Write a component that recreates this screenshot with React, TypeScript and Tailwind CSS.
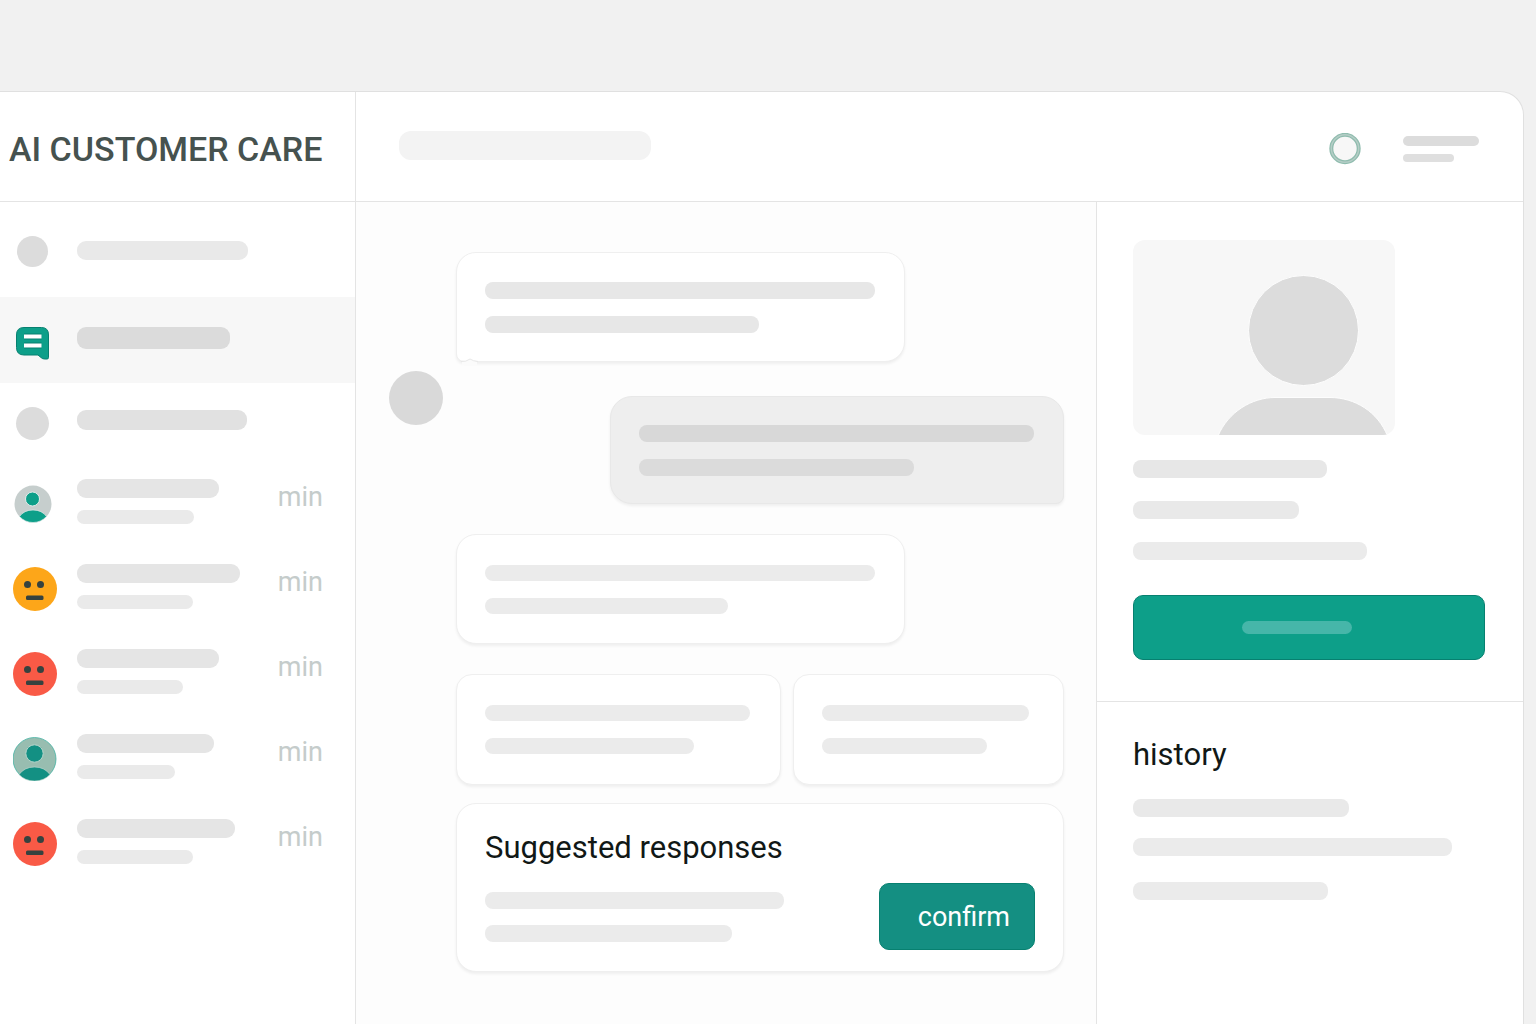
import React, { useState } from "react";
import clsx from "clsx";

const Bar = ({ className }: { className: string }) => (
  <span className={clsx("block max-w-full", className)} />
);

const ChatIcon = () => (
  <svg width="34" height="34" viewBox="0 0 34 34" aria-hidden="true">
    <path
      d="M8 .5H25.500Q32.500 .5 32.500 8V30.500Q32.500 32 31 32H28.500Q26.500 32 25 30.500L22 28H8Q.5 28 .5 20.500V8Q.5 .5 8 .5Z"
      fill="#0d9f89"
      stroke="#078070"
    />
    <path d="M8 9.500H25.500M8 18.500H25.500" stroke="#078070" strokeWidth="6" />
    <path d="M8 9.500H25.500M8 18.500H25.500" stroke="#ffffff" strokeWidth="4" />
  </svg>
);

const Face = ({ fill }: { fill: string }) => (
  <svg width="44" height="44" viewBox="0 0 44 44" aria-hidden="true">
    <circle cx="22" cy="22" r="22" fill={fill} />
    <circle cx="14.500" cy="17.500" r="3.500" fill="#35423f" />
    <circle cx="27.500" cy="17.500" r="3.500" fill="#35423f" />
    <rect x="13" y="28.500" width="17.500" height="4.500" rx="1.500" fill="#35423f" />
  </svg>
);

const PersonGray = () => (
  <svg width="42" height="38" viewBox="0 0 42 38" aria-hidden="true">
    <circle cx="19" cy="19" r="18.500" fill="#c6cecd" />
    <circle cx="18.500" cy="14" r="7" fill="#0d9f89" stroke="#e3eceb" />
    <path
      d="M5.500 31.500Q10 25 19 25T32.500 31.500Q27 37.500 19 37.500T5.500 31.500Z"
      fill="#0d9f89"
      stroke="#e3eceb"
      strokeWidth=".7"
    />
  </svg>
);

const PersonGreen = () => (
  <svg width="44" height="44" viewBox="0 0 44 44" aria-hidden="true">
    <circle cx="21.500" cy="22" r="21.500" fill="#98bdb0" stroke="#45b3a3" strokeWidth=".8" />
    <circle cx="21.500" cy="16.500" r="8.700" fill="#139083" stroke="#b9d6cd" />
    <path
      d="M6 37.500Q11.500 30 21.500 30T37 37.500Q31 44 21.500 44T6 37.500Z"
      fill="#139083"
      stroke="#b9d6cd"
      strokeWidth=".7"
    />
  </svg>
);

const conversations = [
  { avatar: <PersonGray />, first: "w-[142px]", second: "w-[117px]" },
  { avatar: <Face fill="#fda619" />, first: "w-[163px]", second: "w-[116px]" },
  { avatar: <Face fill="#f95a46" />, first: "w-[142px]", second: "w-[106px]" },
  { avatar: <PersonGreen />, first: "w-[137px]", second: "w-[98px]" },
  { avatar: <Face fill="#f95a46" />, first: "w-[158px]", second: "w-[116px]" },
];

const Sidebar = () => {
  const [selected, setSelected] = useState(-1);

  return (
    <aside className="w-[356px] shrink-0 border-r border-[#e4e4e4] bg-white">
      <nav aria-label="Main">
        <a href="#home" aria-label="Home" className="flex h-[95px] gap-[12px] pt-[34px]">
          <span className="flex w-[65px] justify-center">
            <span className="size-[31px] rounded-full bg-[#dcdcdc]" />
          </span>
          <Bar className="mt-[5px] h-[19px] w-[171px] rounded-[9px] bg-[#e9e9e9]" />
        </a>
        <a
          href="#chats"
          aria-label="Chats"
          aria-current="page"
          className="flex h-[86px] gap-[12px] bg-[#f7f7f7] pt-[30px]"
        >
          <span className="flex w-[65px] justify-center">
            <ChatIcon />
          </span>
          <Bar className="h-[22px] w-[153px] rounded-[9px] bg-[#dbdbdb]" />
        </a>
        <a href="#contacts" aria-label="Contacts" className="flex h-[80px] gap-[12px] pt-[24px]">
          <span className="flex w-[65px] justify-center">
            <span className="size-[33px] rounded-full bg-[#dcdcdc]" />
          </span>
          <Bar className="mt-[3px] h-[20px] w-[170px] rounded-[9px] bg-[#e1e1e1]" />
        </a>
      </nav>

      <ul>
        {conversations.map((item, index) => (
          <li key={index}>
            <button
              type="button"
              aria-pressed={selected === index}
              onClick={() => setSelected(index)}
              className="flex h-[85px] w-full items-start pr-8 text-left"
            >
              <span className="flex h-[82px] w-[70px] items-center justify-center">
                {item.avatar}
              </span>
              <span className="flex flex-1 flex-col gap-3 pt-4 pl-[7px]">
                <Bar className={clsx("h-[19px] rounded-[9px] bg-[#e5e5e5]", item.first)} />
                <Bar className={clsx("h-[14px] rounded-[7px] bg-[#eaeaea]", item.second)} />
              </span>
              <span className="pt-4 text-[27px] leading-9 text-[#c5cccb]">min</span>
            </button>
          </li>
        ))}
      </ul>
    </aside>
  );
};

const card = "border border-[#efefef] bg-white px-7 shadow-[0_2px_3px_rgba(0,0,0,0.06)]";

const Chat = () => (
  <main className="flex min-w-0 flex-1 gap-[13px] bg-[#fdfdfd] pr-8 pl-[33px]">
    <div className="pt-[169px]">
      <div className="size-[54px] rounded-full bg-[#d9d9d9]" />
    </div>

    <div className="flex min-w-0 flex-1 flex-col pt-[50px] pb-[51px]">
      <div
        className={clsx(
          card,
          "relative flex h-[110px] w-[449px] max-w-full flex-col justify-center gap-[17px] rounded-[20px] rounded-bl-[8px]",
        )}
      >
        <Bar className="h-[17px] w-[390px] rounded-[8px] bg-[#e7e7e7]" />
        <Bar className="h-[17px] w-[274px] rounded-[8px] bg-[#e7e7e7]" />
        {/* notch of the bubble tail */}
        <svg
          className="absolute -bottom-1 -left-px"
          width="24"
          height="8"
          viewBox="0 0 24 8"
          aria-hidden="true"
        >
          <path d="M6 5Q10 4 14 2Q17 4 21 5V8H6Z" fill="#fbfbfb" />
          <path d="M5 4.500Q10 5 14 2Q17 4 22 4.500" fill="none" stroke="#e8e8e8" />
        </svg>
      </div>

      <div className="mt-[34px] flex h-[108px] w-[454px] max-w-full flex-col justify-center gap-[17px] self-end rounded-[22px] rounded-br-[8px] border border-[#e8e8e8] bg-[#eeeeee] px-7 shadow-[0_2px_3px_rgba(0,0,0,0.06)]">
        <Bar className="h-[17px] w-[395px] rounded-[8px] bg-[#d8d8d8]" />
        <Bar className="h-[17px] w-[275px] rounded-[8px] bg-[#dbdbdb]" />
      </div>

      <div
        className={clsx(
          card,
          "mt-[30px] flex h-[110px] w-[449px] max-w-full flex-col justify-center gap-[17px] rounded-[20px]",
        )}
      >
        <Bar className="h-[16px] w-[390px] rounded-[8px] bg-[#ebebeb]" />
        <Bar className="h-[16px] w-[243px] rounded-[8px] bg-[#ebebeb]" />
      </div>

      <div className="mt-[30px] flex gap-3">
        <div
          className={clsx(
            card,
            "flex h-[111px] w-[325px] min-w-0 flex-col justify-center gap-[17px] rounded-[16px]",
          )}
        >
          <Bar className="h-[16px] w-[265px] rounded-[8px] bg-[#ebebeb]" />
          <Bar className="h-[16px] w-[209px] rounded-[8px] bg-[#ebebeb]" />
        </div>
        <div
          className={clsx(
            card,
            "flex h-[111px] min-w-0 flex-1 flex-col justify-center gap-[17px] rounded-[16px]",
          )}
        >
          <Bar className="h-[16px] w-[207px] rounded-[8px] bg-[#ebebeb]" />
          <Bar className="h-[16px] w-[165px] rounded-[8px] bg-[#ebebeb]" />
        </div>
      </div>

      <section
        aria-labelledby="suggested"
        className={clsx(card, "mt-[18px] flex flex-col rounded-[20px] pt-6 pb-[21px]")}
      >
        <h2 id="suggested" className="text-[31px] leading-10 text-[#111816]">
          Suggested responses
        </h2>
        <div className="mt-[15px] flex items-center justify-between">
          <div className="flex flex-col gap-4">
            <Bar className="h-[17px] w-[299px] rounded-[8px] bg-[#ebebeb]" />
            <Bar className="h-[17px] w-[247px] rounded-[8px] bg-[#ebebeb]" />
          </div>
          <button
            type="button"
            className="flex h-[67px] w-[156px] items-center justify-end rounded-[10px] border border-[#078070] bg-[#148f82] pt-[2px] pr-6 text-[27px] text-white"
          >
            confirm
          </button>
        </div>
      </section>
    </div>
  </main>
);

const Details = () => (
  <aside className="w-[427px] shrink-0 border-l border-[#e4e4e4] bg-white">
    <section
      aria-label="Customer"
      className="border-b border-[#e4e4e4] pt-[38px] pr-[38px] pb-[41px] pl-9"
    >
      <div className="w-[262px] overflow-hidden rounded-[12px] bg-[#f7f7f7]">
        <svg className="block" width="262" height="195" viewBox="0 0 262 195" aria-hidden="true">
          <circle cx="170.500" cy="90.500" r="55" fill="#dcdcdc" stroke="#fdfdfd" />
          <path
            d="M85 196C95 172 119 157.500 142 157.500H197C222 157.500 245 172 254.500 196Z"
            fill="#dcdcdc"
            stroke="#fdfdfd"
          />
        </svg>
      </div>
      <div className="mt-[25px] flex flex-col gap-[23px]">
        <Bar className="h-[18px] w-[194px] rounded-[8px] bg-[#e7e7e7]" />
        <Bar className="h-[18px] w-[166px] rounded-[8px] bg-[#e9e9e9]" />
        <Bar className="h-[18px] w-[234px] rounded-[8px] bg-[#ebebeb]" />
      </div>
      <button
        type="button"
        aria-label="Open profile"
        className="mt-[35px] flex h-[65px] w-full items-center justify-center rounded-[10px] border border-[#078070] bg-[#0d9f89] pr-6"
      >
        <Bar className="h-[13px] w-[110px] rounded-[7px] bg-[#46b6a9]" />
      </button>
    </section>

    <section aria-labelledby="history" className="px-9 pt-[33px]">
      <h2 id="history" className="text-[31px] leading-10 text-[#111816]">
        history
      </h2>
      <div className="mt-6 flex flex-col">
        <Bar className="h-[18px] w-[216px] rounded-[8px] bg-[#e9e9e9]" />
        <Bar className="mt-[21px] h-[18px] w-[319px] rounded-[8px] bg-[#ebebeb]" />
        <Bar className="mt-[26px] h-[18px] w-[195px] rounded-[8px] bg-[#ebebeb]" />
      </div>
    </section>
  </aside>
);

const Header = () => (
  <header className="flex h-[110px] border-b border-[#e4e4e4]">
    <div className="flex w-[356px] shrink-0 items-center border-r border-[#e4e4e4] pt-1 pl-[9px]">
      <h1 className="text-[34px] leading-10 font-medium whitespace-nowrap text-[#46524f]">
        AI CUSTOMER CARE
      </h1>
    </div>
    <div className="flex flex-1 items-center justify-between pr-11 pb-[2px] pl-[43px]">
      <Bar className="h-[29px] w-[252px] rounded-[12px] bg-[#f3f3f3]" />
      <div className="flex items-center gap-[42px] pt-[6px]">
        <svg width="32" height="32" viewBox="0 0 32 32" aria-hidden="true">
          <circle cx="16" cy="15.500" r="13.700" fill="#f7f7f7" stroke="#8fbcae" strokeWidth="4" />
          <circle cx="16" cy="15.500" r="13.700" fill="none" stroke="#b5cdc6" strokeWidth="1.500" />
        </svg>
        <button type="button" aria-label="Menu" className="flex flex-col gap-2">
          <Bar className="h-[10px] w-[76px] rounded-[5px] bg-[#dcdcdc]" />
          <Bar className="h-[8px] w-[51px] rounded-[4px] bg-[#dfdfdf]" />
        </button>
      </div>
    </div>
  </header>
);

export default function App() {
  return (
    <div className="flex min-h-screen flex-col bg-[#f1f1f1] pt-[91px] pr-3 font-['Roboto','Liberation_Sans',sans-serif]">
      <div className="flex flex-1 flex-col overflow-hidden rounded-tr-[24px] border-t border-r border-[#e0e0e0] bg-white">
        <Header />
        <div className="flex flex-1">
          <Sidebar />
          <Chat />
          <Details />
        </div>
      </div>
    </div>
  );
}
